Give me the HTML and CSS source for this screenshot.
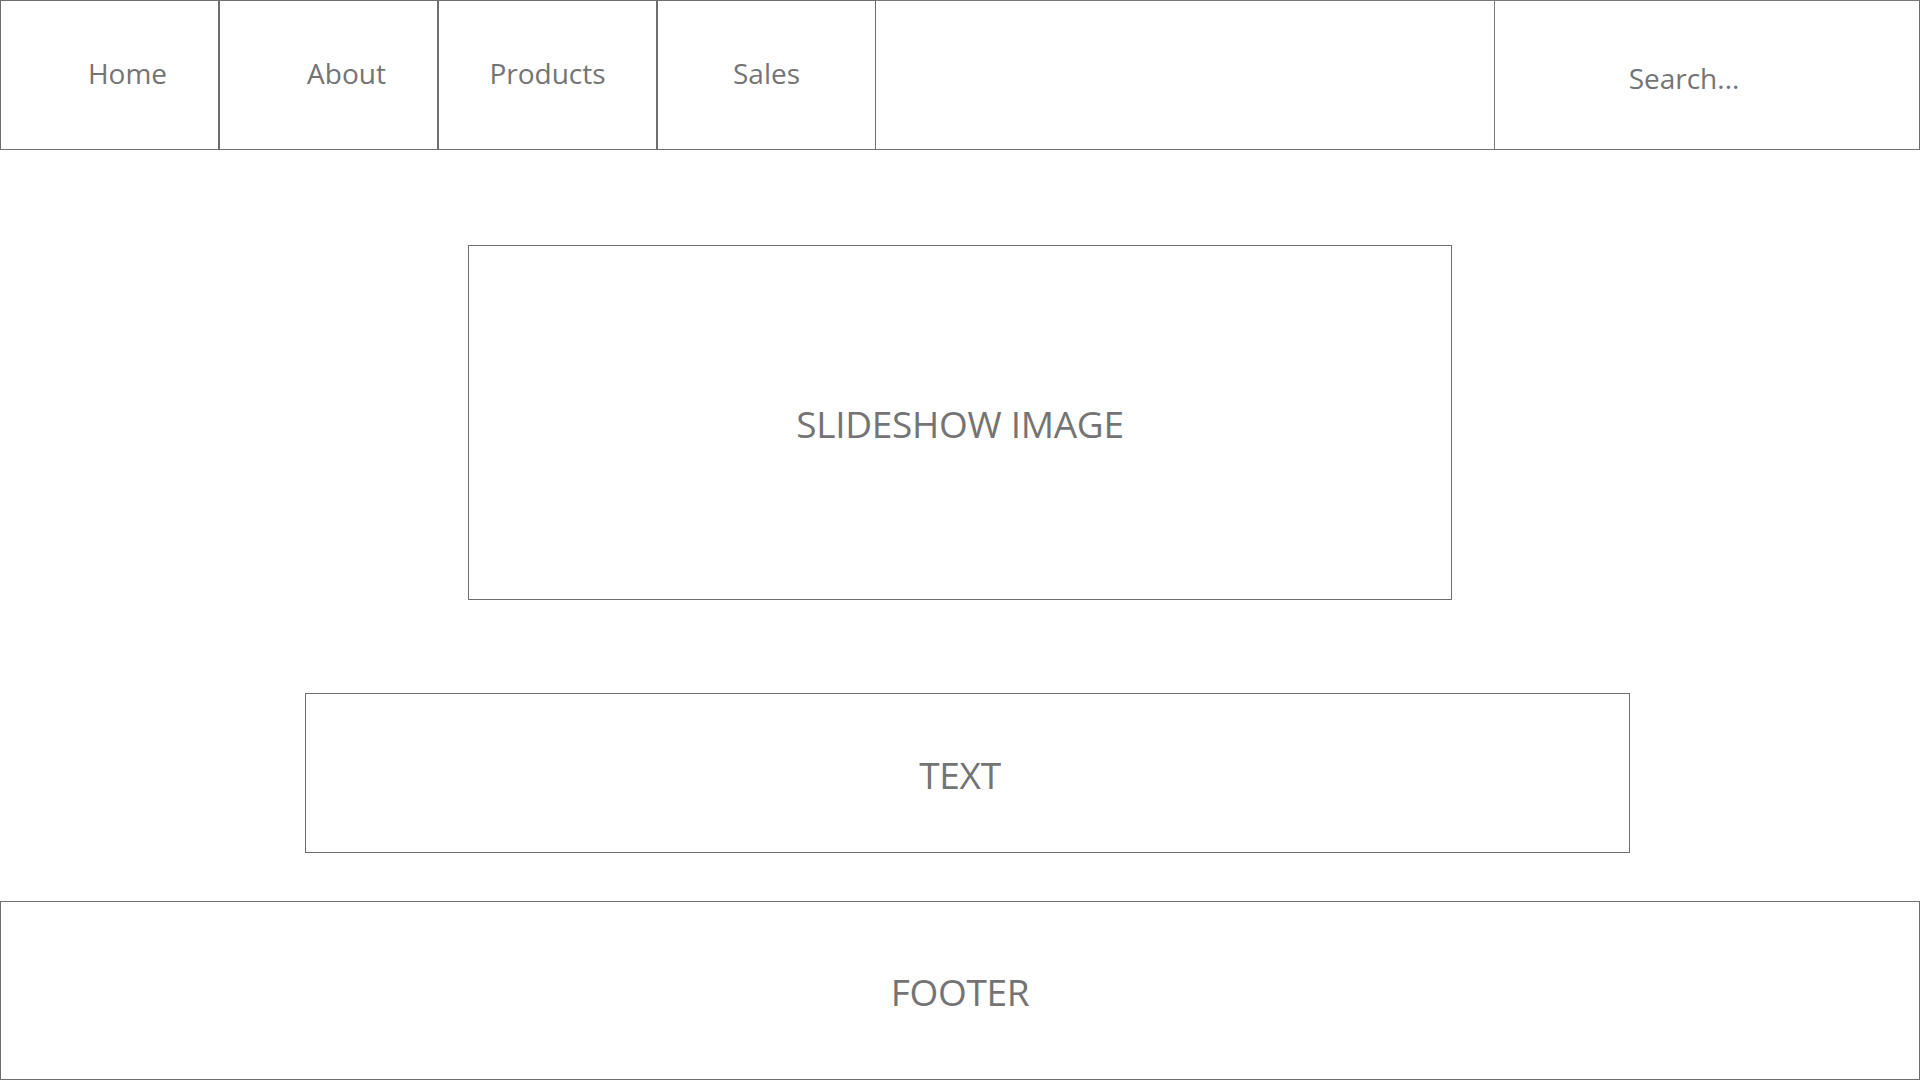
FILE: index.html
```html
<!DOCTYPE html>
<html lang="en">
<head>
<meta charset="utf-8">
<title>Wireframe</title>
<link rel="stylesheet" href="styles.css">
</head>
<body>
<nav class="nav">
  <a class="nav-item nav-item--shift">Home</a>
  <a class="nav-item nav-item--shift">About</a>
  <a class="nav-item">Products</a>
  <a class="nav-item nav-item--last">Sales</a>
  <div class="nav-spacer"></div>
  <div class="nav-search">Search...</div>
</nav>
<main class="main">
  <section class="slideshow"><span class="label">SLIDESHOW IMAGE</span></section>
  <section class="textbox"><span class="label label--text">TEXT</span></section>
</main>
<footer class="footer"><span class="label">FOOTER</span></footer>
</body>
</html>
```
FILE: styles.css
```css
* { box-sizing: border-box; }
html, body { margin: 0; padding: 0; background: #ffffff; }
body {
  width: 1920px;
  height: 1080px;
  overflow: hidden;
  font-family: "Open Sans", "Noto Sans", sans-serif;
  color: #747474;
}
.nav {
  display: flex;
  height: 150px;
}
.nav-item {
  width: 219px;
  height: 150px;
  border: 1px solid #6e6e6e;
  display: flex;
  align-items: center;
  justify-content: center;
  font-size: 28px;
  padding-bottom: 5px;
}
.nav-item--shift { padding-left: 36px; }
.nav-item--last { border-right-width: 1px; }
.nav-spacer {
  width: 619px;
  height: 150px;
  border-top: 1px solid #7a7a7a;
  border-bottom: 1px solid #6e6e6e;
  border-right: 1px solid #7a7a7a;
}
.nav-search {
  flex: 1;
  height: 150px;
  border-top: 1px solid #7a7a7a;
  border-bottom: 1px solid #6e6e6e;
  border-right: 1px solid #6e6e6e;
  display: flex;
  align-items: center;
  justify-content: center;
  font-size: 28px;
  padding-top: 5px;
  padding-right: 46px;
}
.main {
  display: flex;
  flex-direction: column;
  align-items: flex-start;
  padding-top: 95px;
}
.slideshow {
  margin-left: 468px;
  width: 984px;
  height: 355px;
  border: 1px solid #6e6e6e;
  display: flex;
  align-items: center;
  justify-content: center;
  padding-top: 2px;
}
.textbox {
  margin-top: 93px;
  margin-left: 305px;
  width: 1325px;
  height: 160px;
  border: 1px solid #6e6e6e;
  display: flex;
  align-items: center;
  justify-content: center;
  padding-right: 15px;
  padding-top: 2px;
}
.label {
  font-size: 37px;
  line-height: 1;
  letter-spacing: -0.3px;
}
.footer {
  margin-top: 48px;
  height: 179px;
  border: 1px solid #6e6e6e;
  display: flex;
  align-items: center;
  justify-content: center;
  padding-top: 2px;
}
```
